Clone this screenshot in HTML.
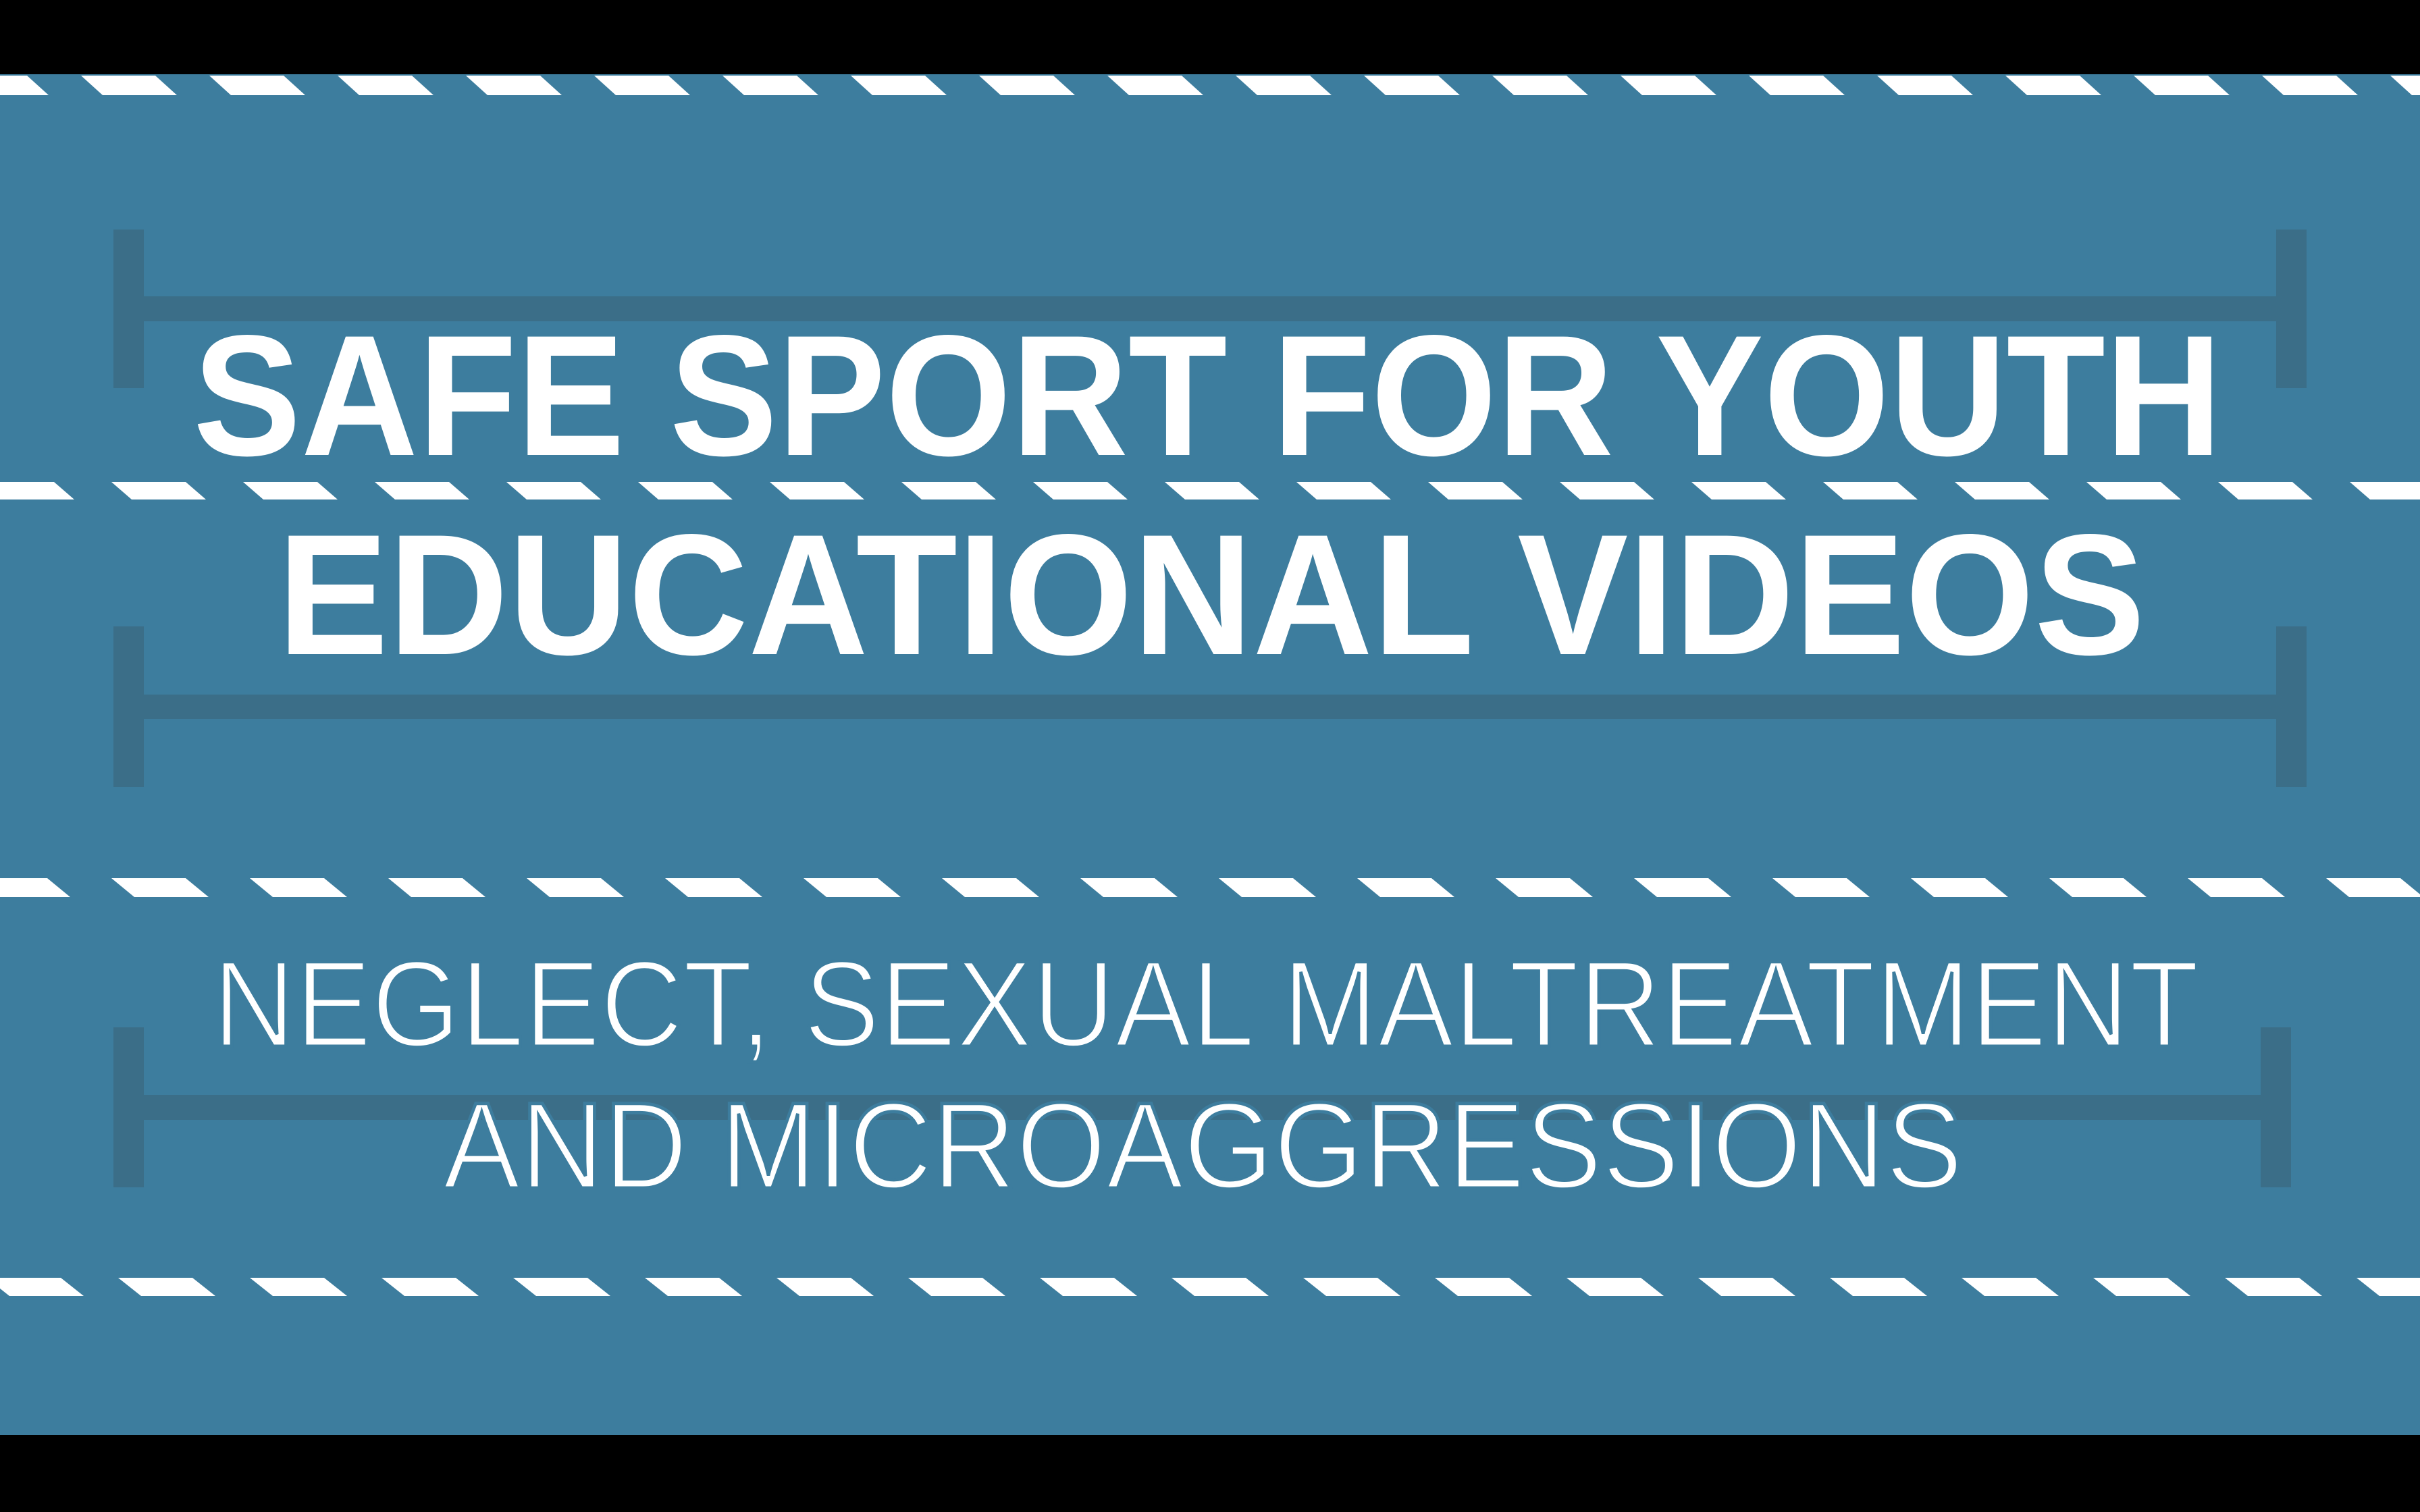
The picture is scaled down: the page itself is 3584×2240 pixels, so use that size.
<!DOCTYPE html>
<html><head><meta charset="utf-8"><style>
html,body{margin:0;padding:0;background:#000;}
svg{display:block}
</style></head><body>
<svg width="3584" height="2240" viewBox="0 0 3584 2240" xmlns="http://www.w3.org/2000/svg">
<defs>
<pattern id="d1" x="-70" y="112" width="190" height="29" patternUnits="userSpaceOnUse"><polygon points="0,0 110,0 142,29 32,29" fill="#fff"/></pattern>
<pattern id="d2" x="-30" y="714" width="195" height="26" patternUnits="userSpaceOnUse"><polygon points="0,0 110,0 140,26 30,26" fill="#fff"/></pattern>
<pattern id="d3" x="-40" y="1301" width="205" height="28" patternUnits="userSpaceOnUse"><polygon points="0,0 110,0 144,28 34,28" fill="#fff"/></pattern>
<pattern id="d4" x="-20" y="1893" width="195" height="27" patternUnits="userSpaceOnUse"><polygon points="0,0 110,0 144,27 34,27" fill="#fff"/></pattern>
</defs>
<rect x="0" y="0" width="3584" height="2240" fill="#000"/>
<rect x="0" y="110" width="3584" height="2016" fill="#3d7d9e"/>
<rect x="0" y="112" width="3584" height="29" fill="url(#d1)"/>
<rect x="0" y="714" width="3584" height="26" fill="url(#d2)"/>
<rect x="0" y="1301" width="3584" height="28" fill="url(#d3)"/>
<rect x="0" y="1893" width="3584" height="27" fill="url(#d4)"/>
<g fill="#3b6e88">
<rect x="168" y="340" width="45" height="235"/><rect x="3371" y="340" width="45" height="235"/><rect x="213" y="439" width="3158" height="37"/>
<rect x="168" y="928" width="45" height="238"/><rect x="3371" y="928" width="45" height="238"/><rect x="213" y="1029" width="3158" height="36"/>
<rect x="168" y="1522" width="45" height="237"/><rect x="3348" y="1522" width="45" height="237"/><rect x="213" y="1622" width="3135" height="37"/>
</g>
<g fill="#fff" font-family="Liberation Sans, sans-serif">
<text x="286" y="674" font-size="255" font-weight="bold" textLength="3005" lengthAdjust="spacingAndGlyphs">SAFE SPORT FOR YOUTH</text>
<text x="411" y="969" font-size="255" font-weight="bold" textLength="2766" lengthAdjust="spacingAndGlyphs">EDUCATIONAL VIDEOS</text>
</g>
<g fill="#fff" stroke="#3d7d9e" stroke-width="5" font-family="Liberation Sans, sans-serif">
<text x="315" y="1550" font-size="182" textLength="2942" lengthAdjust="spacingAndGlyphs">NEGLECT, SEXUAL MALTREATMENT</text>
<text x="656" y="1760" font-size="182" textLength="2251" lengthAdjust="spacingAndGlyphs">AND MICROAGGRESSIONS</text>
</g>
</svg>
</body></html>
